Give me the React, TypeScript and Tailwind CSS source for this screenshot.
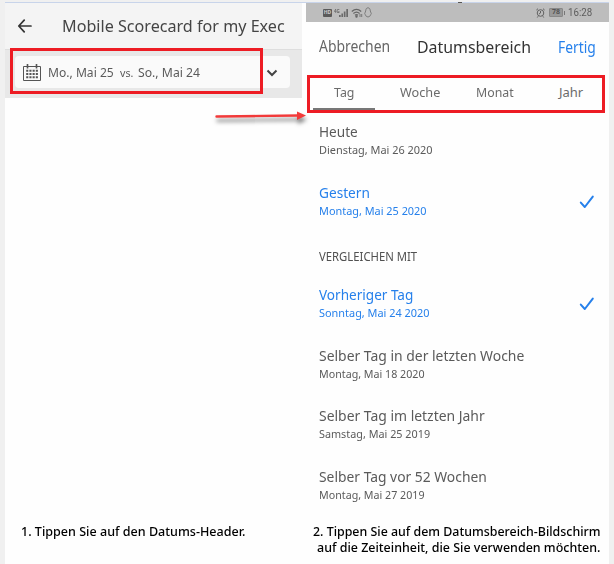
import { useLayoutEffect, useRef, useState } from 'react';

/** One line of text, condensed or widened to an exact width. */
function Fit({ w, children, className = '' }: { w: number; children: string; className?: string }) {
  const ref = useRef<HTMLSpanElement>(null);
  const [scale, setScale] = useState(1);
  useLayoutEffect(() => {
    if (ref.current) setScale(w / ref.current.offsetWidth);
  }, [w]);
  return (
    <span className={`block shrink-0 whitespace-nowrap ${className}`} style={{ width: w }}>
      <span ref={ref} className="inline-block origin-left" style={{ transform: `scaleX(${scale})` }}>
        {children}
      </span>
    </span>
  );
}

function Check() {
  return (
    <svg className="mt-0.5 -mr-px" width="16" height="14" viewBox="0 0 16 14" fill="none" stroke="#2680eb" strokeWidth="2">
      <path d="M1.8 7.6 L5.8 12 L13.8 1.6" strokeLinecap="round" strokeLinejoin="round" />
    </svg>
  );
}

type OptionProps = { title: string; tw: number; date: string; dw: number; selected?: boolean };

function Option({ title, tw, date, dw, selected }: OptionProps) {
  return (
    <div className={`flex h-9 items-center justify-between ${selected ? 'text-[#2680eb]' : 'text-[#5a5a5a]'}`}>
      <div>
        <Fit w={tw} className="h-[19px] text-[15px] leading-[19px]">{title}</Fit>
        <Fit w={dw} className="h-[17px] text-[11.5px] leading-[17px]">{date}</Fit>
      </div>
      {selected && <Check />}
    </div>
  );
}

const tabs = [
  { label: 'Tag', w: 20 },
  { label: 'Woche', w: 40 },
  { label: 'Monat', w: 38 },
  { label: 'Jahr', w: 24 },
];

export default function App() {
  return (
    <div className="relative h-[564px] w-[614px] overflow-hidden bg-[#f0f0f0] pt-0.5 pr-[5px] pl-[5px] font-['Noto_Sans',sans-serif]">
      <div className="flex h-[562px] border-t border-[#c8d4ea] bg-[#fefefe]">
        <section className="flex w-[297px] flex-col">
          <header className="flex h-[47px] items-center border-b border-[#dedede] bg-[#f4f4f4] pl-3">
            <svg width="16" height="14" viewBox="0 0 16 14" fill="none" stroke="#343434" strokeWidth="1.7">
              <path d="M7.2 1.2 L1.8 7 L7.2 12.8 M2 7 H14" strokeLinecap="round" strokeLinejoin="round" />
            </svg>
            <Fit w={223} className="ml-[29px] text-[17px] text-[#444]">Mobile Scorecard for my Exec</Fit>
          </header>
          <div className="h-12 bg-[#e8e8e8] px-2.5 pt-1.5">
            <div className="flex h-8 w-[275px] items-center rounded bg-[#fafafa] pl-2 text-[#5a5a5a]">
              <svg className="mt-0.5" width="18" height="18" viewBox="0 0 18 18" fill="none" stroke="#555" strokeWidth="1">
                <path d="M.5 2.5 H17.5 V16.5 H.5 Z" />
                <path d="M4.5 0 V4.5 M13.5 0 V4.5" strokeWidth="1.6" />
                <path d="M3.2 6.8 H15 M3.2 10 H15 M3.2 13.2 H15" strokeWidth="2" strokeDasharray="2.1 1.1" />
              </svg>
              <Fit w={66} className="mt-0.5 ml-[7px] text-[13px]">Mo., Mai 25</Fit>
              <Fit w={13} className="mt-0.5 ml-1.5 text-[11.5px]">vs.</Fit>
              <Fit w={62} className="mt-0.5 ml-[5px] text-[13px]">So., Mai 24</Fit>
              <svg className="ml-[65px] mt-0.5" width="14" height="10" viewBox="0 0 14 10" fill="none" stroke="#444" strokeWidth="2">
                <path d="M2.5 2.5 L7 7 L11.5 2.5" />
              </svg>
            </div>
          </div>
          <div className="flex flex-1 items-end pb-[25px] pl-4">
            <Fit w={224} className="h-4 text-[13px] leading-4 font-medium text-black">1. Tippen Sie auf den Datums-Header.</Fit>
          </div>
        </section>

        <section className="ml-1 flex w-[303px] flex-col">
          <div className="flex h-[19px] shrink-0 items-center bg-[#bdbdbd] pr-[17px] pl-[17px] text-[#666]">
            <span className="flex h-2 w-[9px] shrink-0 items-center justify-center rounded-[1px] bg-[#5a5a5a] text-[5px] font-bold text-[#ccc]">HD</span>
            <Fit w={6} className="ml-[2px] h-3 text-[6px] leading-[8px] font-bold">4G</Fit>
            <svg className="-ml-px" width="10" height="10" viewBox="0 0 10 10" fill="#6a6a6a">
              <path d="M0 7h1.7v2H0z M2.4 5.5h1.6v3.5H2.4z M4.8 3.5h1.7V9H4.8z M7.3 1H9v8H7.3z" />
            </svg>
            <svg className="ml-0.5" width="12" height="10" viewBox="0 0 12 10" fill="none" stroke="#666" strokeWidth="1.2">
              <path d="M.8 3.5 Q5.5 -.8 10.2 3.5 M2.4 5.5 Q5.5 2.8 8.6 5.5 M4 7.3 Q5.5 6 7 7.3" />
              <circle cx="5.5" cy="8.5" r=".6" fill="#707070" />
              <path d="M9 6v3 M10.7 6v3" strokeWidth=".8" />
            </svg>
            <svg className="ml-px" width="8" height="11" viewBox="0 0 8 11" fill="none" stroke="#7d7d7d" strokeWidth="1">
              <path d="M4 .8 C2.2 .8 1.8 2.4 1.7 4 L.7 6.6 L1.3 7.7 Q1.8 9.8 4 10 Q6.2 9.8 6.7 7.7 L7.3 6.6 L6.3 4 C6.2 2.4 5.8 .8 4 .8Z" />
            </svg>
            <svg className="ml-auto" width="9" height="10" viewBox="0 0 9 10" fill="none" stroke="#606060" strokeWidth="1">
              <circle cx="4.5" cy="5" r="3.3" />
              <path d="M.4 2 L2 .7 M8.6 2 L7 .7 M4.5 3 V5 L3 6 M2 8.3 L1.3 9.5 M7 8.3 L7.7 9.5" />
            </svg>
            <span className="ml-1 flex h-[9px] w-[14px] items-center justify-center rounded-[1px] border border-[#888] bg-[#999] text-[7px] font-bold text-[#555]">78</span>
            <span className="ml-px h-1 w-px bg-[#777]" />
            <Fit w={24} className="ml-[3px] font-['Roboto'] text-[10.5px] text-[#5c5c5c]">16:28</Fit>
          </div>

          <header className="flex h-[53px] shrink-0 items-center pr-[13px] pb-[4px] pl-[13px]">
            <Fit w={71} className="text-[15.5px] text-[#666]">Abbrechen</Fit>
            <Fit w={114} className="ml-[27px] text-[17px] text-[#333]">Datumsbereich</Fit>
            <Fit w={38} className="ml-[27px] text-[16px] text-[#2680eb]">Fertig</Fit>
          </header>

          <nav className="flex h-[35px] shrink-0 text-[13px] text-[#6b6b6b]">
            {tabs.map((t) => (
              <div key={t.label} className="flex w-[75.7px] items-center justify-center">
                <Fit w={t.w}>{t.label}</Fit>
              </div>
            ))}
          </nav>

          <div className="flex flex-col pt-3 pr-[15px] pl-[13px]">
            <Option title="Heute" tw={39} date="Dienstag, Mai 26 2020" dw={114} />
            <div className="h-[25px]" />
            <Option title="Gestern" tw={51} date="Montag, Mai 25 2020" dw={108} selected />
            <Fit w={98} className="mt-[30px] h-4 text-[12px] leading-4 text-[#505050]">VERGLEICHEN MIT</Fit>
            <div className="mt-5 flex flex-col gap-[24.7px]">
              <Option title="Vorheriger Tag" tw={94} date="Sonntag, Mai 24 2020" dw={111} selected />
              <Option title="Selber Tag in der letzten Woche" tw={205} date="Montag, Mai 18 2020" dw={106} />
              <Option title="Selber Tag im letzten Jahr" tw={166} date="Samstag, Mai 25 2019" dw={111} />
              <Option title="Selber Tag vor 52 Wochen" tw={168} date="Montag, Mai 27 2019" dw={106} />
            </div>
          </div>
          <div className="mt-auto mb-[9px] h-8 pl-[7px] text-[13px] leading-4 font-medium text-black">
            <Fit w={288}>2. Tippen Sie auf dem Datumsbereich-Bildschirm</Fit>
            <Fit w={283} className="ml-1">auf die Zeiteinheit, die Sie verwenden möchten.</Fit>
          </div>
        </section>
      </div>

      {/* Annotations lying over the two screens */}
      <div className="absolute top-12 left-2.5 h-[46px] w-[253px] border-[3px] border-[#ed1c24]" />
      <div className="absolute top-[108px] left-[313px] h-[2px] w-[62px] bg-[#777]" />
      <div className="absolute top-[75px] left-[307px] h-[38px] w-[298px] border-[3px] border-[#ed1c24]" />
      <div className="absolute top-0.5 left-[458px] h-px w-1 bg-[#555]" />
      <svg className="absolute top-[106px] left-[212px] drop-shadow-[1px_4px_2px_rgba(0,0,0,0.5)]" width="96" height="20" viewBox="0 0 96 20">
        <path d="M4.5 10.5 L86 9.5" stroke="#f23a3a" strokeWidth="2.4" strokeLinecap="round" />
        <path d="M85 5.5 L94 9.5 L85 14Z" fill="#f23a3a" />
      </svg>
    </div>
  );
}
